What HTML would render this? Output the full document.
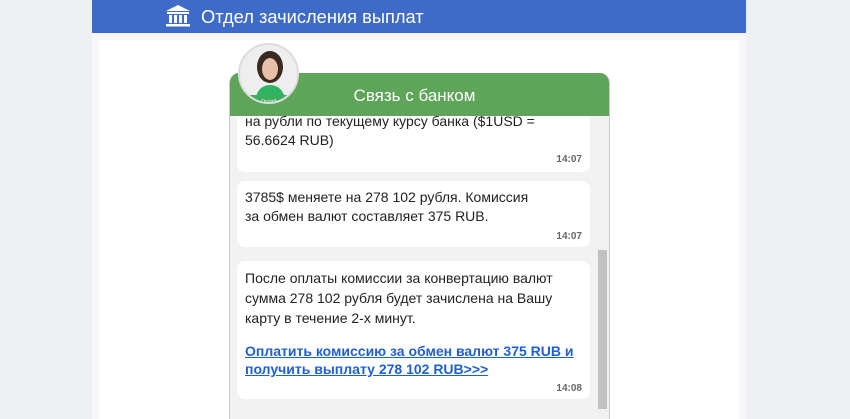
<!DOCTYPE html>
<html><head><meta charset="utf-8"><style>
*{margin:0;padding:0;box-sizing:border-box}
body{width:850px;height:419px;overflow:hidden;background:#eef0f3;font-family:"Liberation Sans","DejaVu Sans",sans-serif;position:relative}
.bar{position:absolute;left:92px;top:0;width:654px;height:33px;background:#3d6bc7;color:#fff;font-size:18.3px}
.bar span{position:absolute;left:109px;top:6px}
.panelbg{position:absolute;left:92px;top:33px;width:654px;height:386px;background:#f7f7f7}
.panel{position:absolute;left:99px;top:40px;width:640px;height:379px;background:#fff}
.chat{position:absolute;left:229px;top:73px;width:381px;height:346px;background:#f2f2f2;border-left:1px solid #ccc;border-right:1px solid #ccc;border-radius:10px 10px 0 0;overflow:hidden}
.hd{position:absolute;left:0;top:0;width:100%;height:43px;background:#5ea55a;color:#fff;font-size:17px;text-align:center;line-height:45px;padding-right:10px;z-index:2}
.msg{position:absolute;left:7px;width:353px;background:#fff;border-radius:8px;font-size:14px;line-height:19px;color:#222;padding:0 8px}
.t{position:absolute;right:8px;font-size:10px;font-weight:bold;color:#666}
a{color:#1f5fd6;font-weight:bold;text-decoration:underline}
.sb{position:absolute;left:367px;top:43px;width:12px;height:303px;background:#f1f1f1}
.th{position:absolute;left:368px;top:177px;width:9px;height:159px;background:#c1c1c1}
.av{position:absolute;left:238px;top:43px;width:61px;height:61px;border-radius:50%;background:#eee;border:2px solid #ddd;z-index:3;overflow:hidden}
</style></head><body>
<div class="bar">
<svg style="position:absolute;left:72px;top:4px" width="28" height="24" viewBox="0 0 28 24"><path d="M14 1L2 7h24z" fill="#fff"/><rect x="3" y="8" width="22" height="2" fill="#fff"/><rect x="5" y="11" width="3" height="8" fill="#fff"/><rect x="10" y="11" width="3" height="8" fill="#fff"/><rect x="15" y="11" width="3" height="8" fill="#fff"/><rect x="20" y="11" width="3" height="8" fill="#fff"/><rect x="2" y="20" width="24" height="2.5" fill="#fff"/></svg>
<span>Отдел зачисления выплат</span></div>
<div class="panelbg"></div><div class="panel"></div>
<div class="av"><svg width="61" height="61" viewBox="0 0 61 61"><ellipse cx="30" cy="22" rx="13" ry="16" fill="#3a2a22"/><ellipse cx="30" cy="24" rx="8" ry="11" fill="#e6c0a8"/><path d="M14 61 Q16 40 30 40 Q44 40 47 61z" fill="#2fb464"/><rect x="0" y="50" width="61" height="11" fill="#3cae5c"/><text x="30" y="58" font-size="5" fill="#fff" text-anchor="middle" font-family="Liberation Sans">Онлайн</text></svg></div>
<div class="chat">
<div class="hd">Связь с банком</div>
<div class="msg" style="top:37px;height:62px;padding-top:2px">на рубли по текущему курсу банка ($1USD =<br>56.6624 RUB)<div class="t" style="top:40px">14:07</div></div>
<div class="msg" style="top:108px;height:66px;padding-top:7px">3785$ меняете на 278 102 рубля. Комиссия<br>за обмен валют составляет 375 RUB.<div class="t" style="top:46px">14:07</div></div>
<div class="msg" style="top:188px;height:138px;padding-top:7px;line-height:20px">После оплаты комиссии за конвертацию валют<br>сумма 278 102 рубля будет зачислена на Вашу<br>карту в течение 2-х минут.<br><div style="margin-top:14px;line-height:18px"><a>Оплатить комиссию за обмен валют 375 RUB и<br>получить выплату 278 102 RUB&gt;&gt;&gt;</a></div><div class="t" style="top:118px">14:08</div></div>
<div class="sb"></div><div class="th"></div>
</div>
</body></html>
